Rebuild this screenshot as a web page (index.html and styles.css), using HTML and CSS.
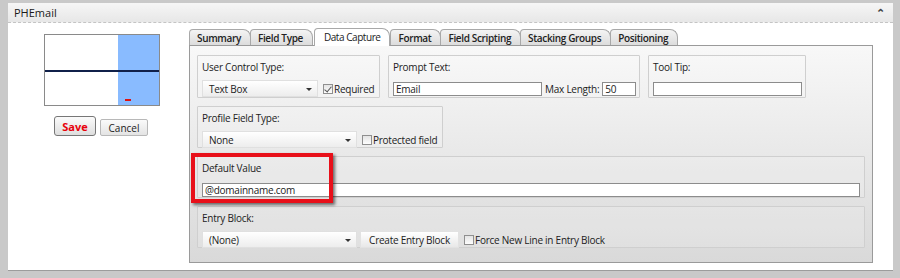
FILE: index.html
```html
<!DOCTYPE html>
<html lang="en">
<head>
    <meta charset="UTF-8">
    <title>PHEmail - Field Editor</title>
    <link rel="stylesheet" href="styles.css">
</head>
<body>
    <div class="window">
        <div class="header">
            <span class="title">PHEmail</span>
            <span class="collapse">&#8963;</span>
        </div>
        <div class="content">
            <div class="left-col">
                <div class="preview">
                    <div class="preview-white"></div>
                    <div class="preview-blue"><span class="marker"></span></div>
                    <div class="preview-line"></div>
                </div>
                <div class="actions">
                    <button class="save-btn">Save</button>
                    <button class="cancel-btn">Cancel</button>
                </div>
            </div>
            <div class="tabs-area">
                <div class="tab-strip">
                    <div class="tab">Summary</div>
                    <div class="tab">Field Type</div>
                    <div class="tab active">Data Capture</div>
                    <div class="tab">Format</div>
                    <div class="tab">Field Scripting</div>
                    <div class="tab">Stacking Groups</div>
                    <div class="tab">Positioning</div>
                </div>
                <div class="tab-panel">
                    <div class="row first">
                        <div class="group g-control">
                            <label>User Control Type:</label>
                            <div class="line">
                                <div class="select w-control">Text Box<span class="arrow"></span></div>
                                <span class="check checked"></span><span class="check-label">Required</span>
                            </div>
                        </div>
                        <div class="group g-prompt">
                            <label>Prompt Text:</label>
                            <div class="line">
                                <div class="input w-prompt">Email</div>
                                <span class="inline-label">Max Length:</span>
                                <div class="input w-max">50</div>
                            </div>
                        </div>
                        <div class="group g-tip">
                            <label>Tool Tip:</label>
                            <div class="line">
                                <div class="input w-tip"></div>
                            </div>
                        </div>
                    </div>
                    <div class="row">
                        <div class="group g-profile">
                            <label>Profile Field Type:</label>
                            <div class="line">
                                <div class="select w-profile">None<span class="arrow"></span></div>
                                <span class="check"></span><span class="check-label">Protected field</span>
                            </div>
                        </div>
                    </div>
                    <div class="row">
                        <div class="group wide">
                            <label>Default Value</label>
                            <div class="line">
                                <div class="input full">@domainname.com</div>
                            </div>
                        </div>
                    </div>
                    <div class="row">
                        <div class="group wide">
                            <label>Entry Block:</label>
                            <div class="line">
                                <div class="select w-profile">(None)<span class="arrow"></span></div>
                                <button class="plain-btn">Create Entry Block</button>
                                <span class="check"></span><span class="check-label">Force New Line in Entry Block</span>
                            </div>
                        </div>
                    </div>
                    <div class="highlight"></div>
                </div>
            </div>
        </div>
    </div>
</body>
</html>
```

FILE: styles.css
```css
body {
    margin: 0;
    padding: 3px 7px 0 8px;
    background-color: #c9c9c9;
    font-family: "Open Sans", Arial, sans-serif;
    font-size: 10px;
    letter-spacing: -0.25px;
    color: #222;
}
.window {
    background-color: white;
    height: 268px;
    box-sizing: border-box;
    border-bottom: 1px solid #9c9c9c;
}
.header {
    height: 19px;
    background: linear-gradient(#f6f6f6, #e7e7e7);
    border-bottom: 1px dashed #c4c4c4;
    display: flex;
    justify-content: space-between;
    align-items: center;
    padding: 0 8px 0 6px;
}
.title {
    font-size: 11px;
    letter-spacing: 0;
    color: #1a1a1a;
}
.collapse {
    font-size: 11px;
    color: #444;
    font-weight: bold;
}
.content {
    display: flex;
}
.left-col {
    width: 181px;
    display: flex;
    flex-direction: column;
    align-items: flex-start;
}
.preview {
    position: relative;
    margin: 11px 0 0 36px;
    width: 114px;
    height: 70px;
    border: 1px solid #8a8a8a;
    display: flex;
}
.preview-white {
    width: 73px;
    background-color: white;
}
.preview-blue {
    flex: 1;
    background-color: #89bbff;
    position: relative;
}
.marker {
    position: absolute;
    left: 7px;
    bottom: 4px;
    width: 6px;
    height: 2px;
    background-color: #e01010;
}
.preview-line {
    position: absolute;
    left: 0;
    right: 0;
    top: 35px;
    height: 2px;
    background-color: #10204a;
}
.actions {
    display: flex;
    align-items: flex-end;
    gap: 4px;
    margin: 10px 0 0 46px;
}
.save-btn {
    font-family: inherit;
    font-size: 11px;
    font-weight: bold;
    color: #e8000b;
    width: 42px;
    height: 20px;
    padding: 0;
    border: 1px solid #777;
    border-radius: 3px;
    background: linear-gradient(#fbfbfb, #dedede);
}
.cancel-btn {
    font-family: inherit;
    font-size: 10px;
    color: #222;
    width: 48px;
    height: 17px;
    padding: 0;
    border: 1px solid #b8b8b8;
    border-radius: 2px;
    background: linear-gradient(#fafafa, #e4e4e4);
}
.tabs-area {
    margin-top: 5px;
    width: 684px;
}
.tab-strip {
    display: flex;
    height: 17px;
    align-items: flex-end;
}
.tab {
    height: 16px;
    line-height: 16px;
    box-sizing: border-box;
    padding: 0 9px 0 7px;
    margin-right: -1px;
    border: 1px solid #a8a8a8;
    border-bottom: none;
    border-radius: 4px 8px 0 0;
    background: linear-gradient(#f4f4f4, #dcdcdc);
    font-weight: 600;
    letter-spacing: -0.35px;
    color: #222;
    white-space: nowrap;
}
.tab.active {
    height: 18px;
    margin: 0 0 -1px 2px;
    background: white;
    position: relative;
    z-index: 1;
    padding: 0 9px;
    font-weight: 500;
    letter-spacing: -0.45px;
}
.tab-panel {
    position: relative;
    height: 218px;
    box-sizing: border-box;
    border: 1px solid #9a9a9a;
    background: linear-gradient(#f8f8f8, #d9d9d9);
    padding: 9px 7px;
    display: flex;
    flex-direction: column;
    gap: 8px;
}
.row {
    display: flex;
    gap: 8px;
}
.group {
    height: 42px;
    flex: none;
    box-sizing: border-box;
    border: 1px solid #cfcfcf;
    border-radius: 1px;
    padding: 5px 4px 0 4px;
    background: rgba(255, 255, 255, 0.15);
    white-space: nowrap;
}
.first .group { height: 43px; }
.g-control { width: 183px; }
.g-prompt { width: 252px; }
.g-tip { width: 158px; }
.g-profile { width: 246px; }
.wide { width: 668px; }
label {
    display: block;
    height: 12px;
    line-height: 12px;
    margin-bottom: 7px;
    color: #222;
}
.line {
    display: flex;
    align-items: center;
    height: 17px;
}
.select {
    position: relative;
    flex: none;
    height: 17px;
    line-height: 17px;
    box-sizing: border-box;
    padding-left: 6px;
    background: linear-gradient(#ffffff, #ededed);
    border: 1px solid #e0e0e0;
}
.arrow {
    position: absolute;
    right: 5px;
    top: 7px;
    border-left: 3px solid transparent;
    border-right: 3px solid transparent;
    border-top: 3px solid #333;
}
.w-control { width: 116px; }
.w-profile { width: 155px; }
.input {
    flex: none;
    height: 14px;
    line-height: 13px;
    box-sizing: border-box;
    border: 1px solid #8c8c8c;
    background-color: white;
    padding-left: 2px;
}
.w-prompt { width: 149px; }
.w-max { width: 34px; }
.w-tip { width: 149px; }
.full { width: 658px; }
.inline-label {
    margin: 0 3px 0 3px;
}
.check {
    flex: none;
    width: 10px;
    height: 10px;
    box-sizing: border-box;
    border: 1px solid #8f8f8f;
    background: linear-gradient(#e4e4e4, #fdfdfd);
    margin: 0 1px 0 5px;
    position: relative;
}
.check.checked::after {
    content: "";
    position: absolute;
    left: 2px;
    top: 0px;
    width: 3px;
    height: 6px;
    border-right: 1px solid #555;
    border-bottom: 1px solid #555;
    transform: rotate(40deg);
}
.plain-btn {
    font-family: inherit;
    font-size: 10px;
    letter-spacing: -0.25px;
    color: #222;
    height: 17px;
    width: 99px;
    padding: 0;
    margin-left: 3px;
    border: 1px solid #e2e2e2;
    background: linear-gradient(#ffffff, #e8e8e8);
}
.highlight {
    position: absolute;
    left: 1px;
    top: 107px;
    width: 142px;
    height: 50px;
    box-sizing: border-box;
    border: 4px solid #e8101a;
    box-shadow: 2px 2px 3px rgba(0, 0, 0, 0.55);
}
```
